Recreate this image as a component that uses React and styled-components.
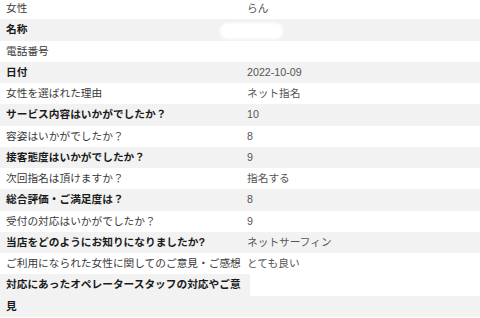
import React from "react";
import styled, { createGlobalStyle } from "styled-components";

const Global = createGlobalStyle`
  html, body { margin: 0; padding: 0; background: #fff; }
  body { font-family: "Liberation Sans", "Noto Sans CJK JP", sans-serif; overflow: hidden; }
`;

const Table = styled.div`
  display: flex;
  flex-direction: column;
  width: 480px;
  margin-top: -2px;
`;

const Row = styled.div`
  display: grid;
  grid-template-columns: 247px 1fr;
  height: ${(p) => (p.$tall ? "43px" : "21.25px")};
  background: ${(p) => (p.$shade ? "#f2f2f2" : "#fff")};
  font-size: 10.7px;
  line-height: 21.25px;
  position: relative;
`;

const Label = styled.div`
  padding-left: 6px;
  margin-right: -3px;
  color: ${(p) => (p.$bold ? "#1a1a1a" : "#3a3a3a")};
  font-weight: ${(p) => (p.$bold ? 700 : 400)};
  white-space: ${(p) => (p.$wrap ? "normal" : "nowrap")};
  line-height: ${(p) => (p.$wrap ? "21.5px" : "21.25px")};
  background: ${(p) => (p.$shade ? "#f2f2f2" : "transparent")};
  position: relative;
  z-index: 1;
`;

const Value = styled.div`
  color: #555;
  white-space: nowrap;
  position: relative;
  background: ${(p) =>
    p.$split ? "linear-gradient(#fff 0 21.5px, #f2f2f2 21.5px 100%)" : "transparent"};
`;

const Redact = styled.span`
  position: absolute;
  left: -27px;
  top: 4px;
  width: 63px;
  height: 16px;
  border-radius: 8px;
  background: #fff;
  filter: blur(0.8px);
`;

const rows = [
  ["女性", "らん"],
  ["名称", "", "redact"],
  ["電話番号", ""],
  ["日付", "2022-10-09"],
  ["女性を選ばれた理由", "ネット指名"],
  ["サービス内容はいかがでしたか？", "10"],
  ["容姿はいかがでしたか？", "8"],
  ["接客態度はいかがでしたか？", "9"],
  ["次回指名は頂けますか？", "指名する"],
  ["総合評価・ご満足度は？", "8"],
  ["受付の対応はいかがでしたか？", "9"],
  ["当店をどのようにお知りになりましたか?", "ネットサーフィン"],
  ["ご利用になられた女性に関してのご意見・ご感想", "とても良い"],
  ["対応にあったオペレータースタッフの対応やご意見", "", "tall"],
];

export default function App() {
  return (
    <>
      <Global />
      <Table>
        {rows.map(([label, value, kind], i) => {
          const shade = i % 2 === 1;
          const tall = kind === "tall";
          return (
            <Row key={i} $shade={shade && !tall} $tall={tall}>
              <Label $bold={shade} $wrap={tall} $shade={tall}>
                {label}
              </Label>
              <Value $split={tall}>
                {kind === "redact" && <Redact />}
                {value}
              </Value>
            </Row>
          );
        })}
      </Table>
    </>
  );
}
